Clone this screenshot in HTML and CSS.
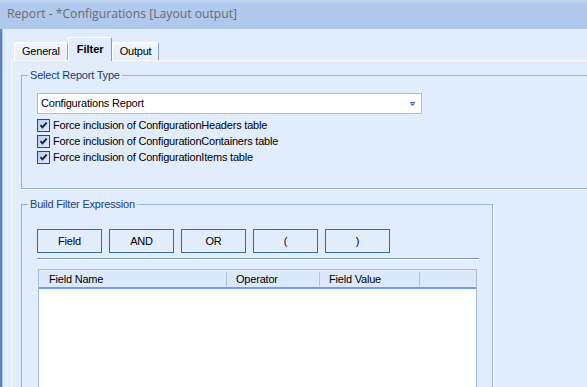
FILE: index.html
```html
<html>
	<head>
		<title>Report - *Configurations [Layout output]</title>
		<link rel="stylesheet" href="styles.css">
	</head>
	<body>
		<div class="window">
			<div class="titlebar">Report - *Configurations [Layout output]</div>
			<div class="client">
				<div class="tabs">
					<div class="tab">General</div>
					<div class="tab active">Filter</div>
					<div class="tab">Output</div>
				</div>
				<div class="page">
					<div class="group group-type">
						<span class="legend">Select Report Type</span>
						<div class="combo">
							<span>Configurations Report</span>
							<svg width="5" height="4" viewBox="0 0 5 4"><rect x="0" y="0" width="5" height="1" fill="#4566b0"/><polygon points="0,1.5 5,1.5 2.5,4" fill="#4566b0"/></svg>
						</div>
						<div class="check"><span class="box"><svg width="11" height="11" viewBox="0 0 11 11"><path d="M2.5 5.2 L4.5 7.4 L8.6 2.6" stroke="#10203a" stroke-width="1.8" fill="none"/></svg></span>Force inclusion of ConfigurationHeaders table</div>
						<div class="check"><span class="box"><svg width="11" height="11" viewBox="0 0 11 11"><path d="M2.5 5.2 L4.5 7.4 L8.6 2.6" stroke="#10203a" stroke-width="1.8" fill="none"/></svg></span>Force inclusion of ConfigurationContainers table</div>
						<div class="check"><span class="box"><svg width="11" height="11" viewBox="0 0 11 11"><path d="M2.5 5.2 L4.5 7.4 L8.6 2.6" stroke="#10203a" stroke-width="1.8" fill="none"/></svg></span>Force inclusion of ConfigurationItems table</div>
					</div>
					<div class="group group-filter">
						<span class="legend">Build Filter Expression</span>
						<div class="buttons">
							<button class="btn">Field</button>
							<button class="btn">AND</button>
							<button class="btn">OR</button>
							<button class="btn">(</button>
							<button class="btn">)</button>
						</div>
						<div class="sep"></div>
						<div class="list">
							<div class="list-head">
								<div class="col col-name">Field Name</div>
								<div class="col col-op">Operator</div>
								<div class="col col-value">Field Value</div>
							</div>
						</div>
					</div>
				</div>
			</div>
		</div>
	</body>
</html>
```

FILE: styles.css
```css
body{
	margin: 0;
	background-color: #e1ecfc;
	font-family: 'Liberation Sans', Arial, sans-serif;
	font-size: 11px;
	letter-spacing: -0.2px;
	color: #000;
}
.window{
	width: 587px;
	height: 387px;
	overflow: hidden;
	display: flex;
	flex-direction: column;
}
.titlebar{
	height: 29px;
	flex-shrink: 0;
	box-sizing: border-box;
	padding: 5px 0 0 7px;
	background: linear-gradient(#c2d6f3, #b0c9ec 15%, #afc8eb);
	color: #6b6b70;
	font-family: 'Open Sans', sans-serif;
	font-size: 12.2px;
	letter-spacing: 0;
	line-height: 18px;
}
.client{
	flex: 1;
	display: flex;
	flex-direction: column;
	border-left: 2px solid #5d82c3;
	box-shadow: inset 1px 0 0 #a8c0e6;
	padding: 8px 0 0 9px;
}
.tabs{
	display: flex;
	align-items: flex-end;
	height: 23px;
	margin-left: 3px;
	position: relative;
	z-index: 1;
}
.tab{
	height: 18px;
	box-sizing: border-box;
	padding: 2px 7px 0 7px;
	line-height: 13px;
	background: linear-gradient(#f3f7fd, #e4edfb);
	border-top: 1px solid #ffffff;
	border-left: 1px solid #ffffff;
	border-right: 1px solid #86a6d8;
	border-radius: 2px 2px 0 0;
}
.tab.active{
	height: 24px;
	margin-bottom: -1px;
	padding: 5px 7px 0 8px;
	font-weight: bold;
	letter-spacing: 0;
	background: #e1ecfc;
	border-right-color: #7a9cd0;
}
.page{
	flex: 1;
	border-top: 1px solid #fbf8ee;
	border-left: 1px solid #fbf8ee;
	padding: 14px 0 0 9px;
}
.group{
	position: relative;
	box-sizing: border-box;
	border: 1px solid #96b1da;
	box-shadow: 1px 1px 0 #ffffff;
	padding: 17px 0 0 15px;
}
.group-type{
	width: 620px;
	height: 114px;
}
.group-filter{
	width: 472px;
	height: 220px;
	margin-top: 15px;
	padding-top: 24px;
}
.legend{
	position: absolute;
	top: -8px;
	left: 6px;
	padding: 0 2px;
	line-height: 15px;
	color: #1b3c7a;
	background: #e1ecfc;
}
.combo{
	width: 385px;
	height: 21px;
	box-sizing: border-box;
	border: 1px solid #a9bedb;
	background: #ffffff;
	display: flex;
	align-items: center;
	justify-content: space-between;
	padding: 0 6px 1px 3px;
	margin-bottom: 5px;
}
.combo svg{
	margin-top: 1px;
}
.check{
	display: flex;
	align-items: flex-start;
	height: 16px;
	line-height: 13px;
	gap: 3px;
}
.box{
	width: 13px;
	height: 13px;
	box-sizing: border-box;
	border: 1px solid #1d4f86;
	background: linear-gradient(135deg, #b3cff4, #dce9fb);
	display: flex;
}
.buttons{
	display: flex;
	gap: 7px;
}
.btn{
	width: 65px;
	height: 24px;
	border: 1px solid #3a6a9c;
	background: #e3eefd;
	font-family: 'Liberation Sans', Arial, sans-serif;
	font-size: 11px;
	letter-spacing: -0.2px;
	color: #000;
	padding: 0;
}
.sep{
	width: 442px;
	height: 1px;
	margin-top: 5px;
	background: #7b96bd;
	border-bottom: 1px solid #ffffff;
}
.list{
	width: 439px;
	height: 200px;
	box-sizing: border-box;
	margin: 9px 0 0 1px;
	border: 1px solid #a5bfe3;
	background: #ffffff;
}
.list-head{
	display: flex;
	align-items: center;
	height: 19px;
	box-sizing: border-box;
	background: #dce9fb;
	border-bottom: 2px solid #6f9fe0;
}
.col{
	height: 14px;
	line-height: 14px;
	box-sizing: border-box;
	padding-left: 9px;
	border-right: 1px solid #a7c5ee;
}
.col-name{
	width: 188px;
	padding-left: 10px;
}
.col-op{
	width: 93px;
}
.col-value{
	width: 100px;
}
```
